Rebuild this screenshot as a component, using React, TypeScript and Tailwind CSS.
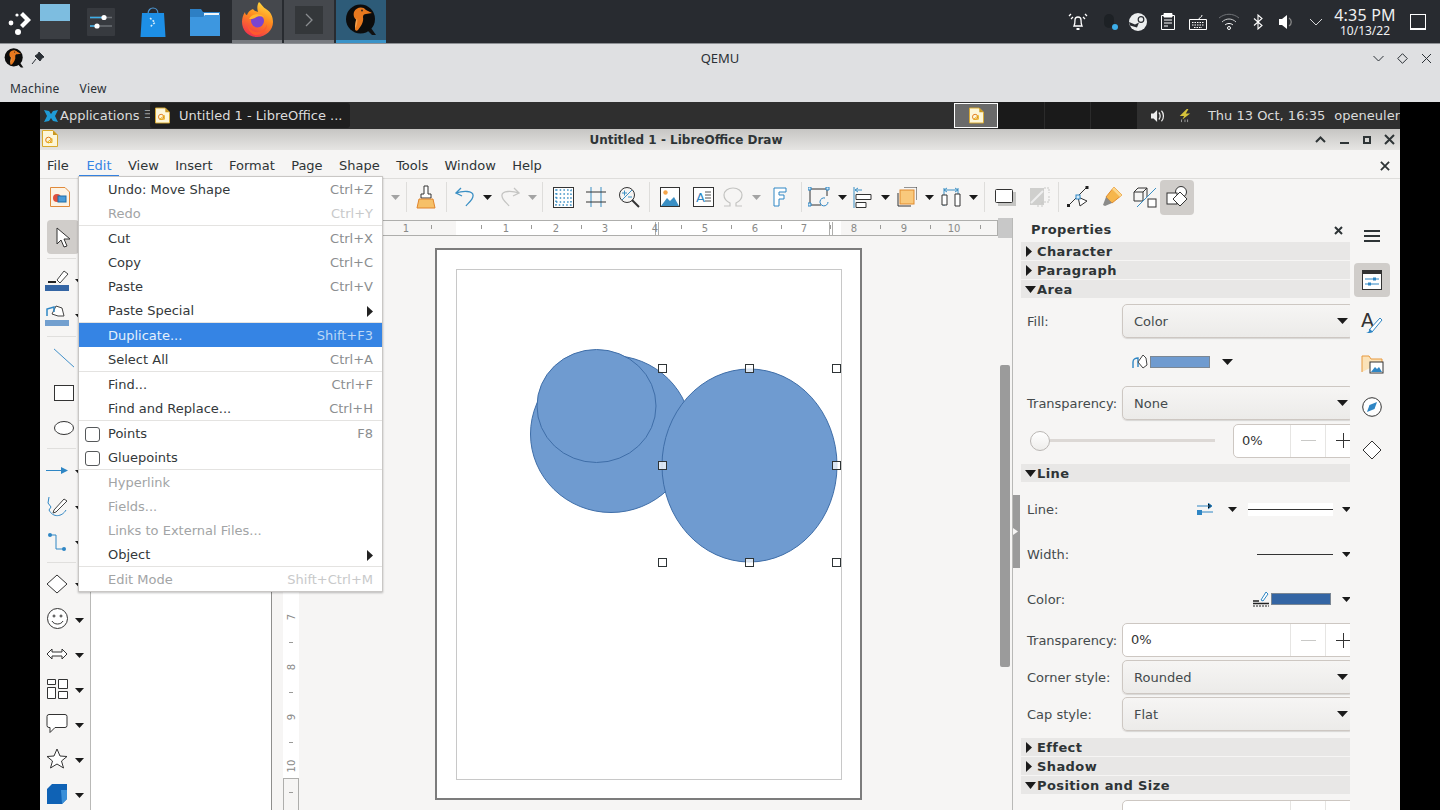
import type { ReactNode } from 'react';

const dejavu = "font-['DejaVu_Sans',sans-serif]";
const noto = "font-['Noto_Sans',sans-serif]";

function Drop({ grey }: { grey?: boolean }) {
  return (
    <svg width="9" height="5" viewBox="0 0 9 5" aria-hidden="true">
      <path d="M0 0h9L4.500 5z" fill={grey ? '#a3a3a3' : '#1a1a1a'} />
    </svg>
  );
}

function Slot({ w, children }: { w: string; children?: ReactNode }) {
  return <div className={`${w} h-full flex items-center justify-center shrink-0`}>{children}</div>;
}

function Sep() {
  return <div className="w-px h-[30px] bg-[#dedddb]" />;
}

function Qemu({ size }: { size: number }) {
  return (
    <svg width={size} height={size} viewBox="0 0 32 32" aria-hidden="true">
      <path d="M22 26l5 5h4l-5-7z" fill="#111" />
      <circle cx="15.500" cy="15" r="14.500" fill="#0c0c0c" />
      <path d="M9 8c2-5 9-6 12-2l6 3-6 1c-2 0-3 1-3 3 1 5-2 9-5 13-1 1-3 1-3-1 0-4 2-6 2-9-3-1-4-5-3-8z" fill="#e8781e" />
      <path d="M12 14c1 4 0 7-2 11 0-4 0-8 2-11z" fill="#f7a04a" />
      <circle cx="17" cy="6.500" r="0.900" fill="#222" />
    </svg>
  );
}

function Firefox() {
  return (
    <svg width="32" height="36" viewBox="0 0 32 36" aria-hidden="true">
      <defs>
        <linearGradient id="ff" x1="0.700" y1="0" x2="0.300" y2="1">
          <stop offset="0" stopColor="#ffdc3e" />
          <stop offset="0.450" stopColor="#ff8a1f" />
          <stop offset="1" stopColor="#f0304e" />
        </linearGradient>
      </defs>
      <path d="M18 0c4 4 4 5 7 7 5 3 7 8 7 13 0 8-7 15-16 15S1 28 1 20c0-4 1-7 3-10 0 2 1 3 2 3 1-3 3-5 6-6 1 2 3 2 5 3-1-3-1-7 1-10z" fill="url(#ff)" />
      <circle cx="16.500" cy="19" r="6.500" fill="#7a44d0" />
      <path d="M8 17c2-5 10-7 15-2-3-1-7-1-9 1-2 1-4 1-6 1z" fill="#ffb72e" />
      <path d="M6 19c0 7 6 12 12 11 4-1 7-4 8-8 0 6-5 11-11 11-5 0-9-6-9-14z" fill="#ff5a2e" />
    </svg>
  );
}

function TaskBar() {
  return (
    <div className="h-[44px] shrink-0 bg-[#282b30] border-b border-[#8d9094] flex items-stretch relative z-10">
      <Slot w="w-[40px]">
        <svg width="26" height="28" viewBox="0 0 26 28" aria-hidden="true">
          <circle cx="10" cy="7" r="1.600" fill="#fff" />
          <circle cx="4" cy="15" r="2.400" fill="#fff" />
          <circle cx="11" cy="24" r="3" fill="#fff" />
          <path d="M16 4l8 8-8 8-3-3 5-5-5-5z" fill="#fff" />
        </svg>
      </Slot>
      <div className="w-[30px] h-[35px] mt-[4px] bg-[#3b3e43]">
        <div className="h-[17px] bg-[#7dbde0]" />
      </div>
      <Slot w="w-[62px]">
        <svg width="28" height="28" viewBox="0 0 28 28" aria-hidden="true">
          <rect width="28" height="28" rx="1" fill="#373a3f" />
          <path d="M3 9.500h22M3 18h22" stroke="#6c7075" strokeWidth="1.500" />
          <path d="M3 9.500h13M3 18h7" stroke="#3daee9" strokeWidth="1.500" />
          <circle cx="17" cy="9.500" r="2.600" fill="#fff" />
          <circle cx="10" cy="18" r="2.600" fill="#fff" />
        </svg>
      </Slot>
      <Slot w="w-[42px]">
        <svg width="26" height="30" viewBox="0 0 26 30" aria-hidden="true">
          <path d="M8 7c0-8 10-8 10 0" fill="none" stroke="#4d9ad8" strokeWidth="1.200" />
          <path d="M2 6h22l1.500 24H.5z" fill="#1d8fe6" />
          <path d="M10 11l5 4.500-5 4.500" fill="none" stroke="#d8effc" strokeWidth="1.500" strokeDasharray="2 1.500" />
        </svg>
      </Slot>
      <Slot w="w-[58px]">
        <svg width="30" height="28" viewBox="0 0 30 28" className="ml-[3px]" aria-hidden="true">
          <path d="M0 1h11l2 3h17v24H0z" fill="#2d7fc4" />
          <path d="M14 5h15v4H14z" fill="#f3f6f8" />
          <path d="M0 9h13l2-2h15v21H0z" fill="#3d97e0" />
        </svg>
      </Slot>
      <div className="w-[50px] bg-[#45484d] border-b-[3px] border-[#777a7f] flex items-center justify-center">
        <Firefox />
      </div>
      <div className="w-[50px] ml-[2px] bg-[#45484d] border-b-[3px] border-[#777a7f] flex items-center justify-center">
        <div className="w-[28px] h-[28px] bg-[#34373a] flex items-center justify-center">
          <svg width="10" height="14" viewBox="0 0 10 14" aria-hidden="true">
            <path d="M2 1l6 6-6 6" fill="none" stroke="#8a8d90" strokeWidth="1.300" />
          </svg>
        </div>
      </div>
      <div className="w-[50px] ml-[2px] bg-[#2d5b78] border-b-[3px] border-[#3a93c8] flex items-center justify-center">
        <Qemu size={32} />
      </div>
      <div className="flex-1" />
      <Slot w="w-[44px]">
        <svg width="20" height="20" viewBox="0 0 20 20" fill="none" stroke="#fff" strokeWidth="1.300" aria-hidden="true">
          <path d="M6 14c1-2 1-4 1-6 0-4 6-4 6 0 0 2 0 4 1 6z" />
          <path d="M8.500 17h3" strokeWidth="2" />
          <path d="M1 4l2-2M19 4l-2-2M3 7l2-2M17 7l-2-2" />
        </svg>
      </Slot>
      <Slot w="w-[26px]">
        <div className="relative w-[14px] h-[16px] -ml-[4px]">
          <div className="w-[10px] h-[14px] rounded-full bg-[#1d2125]" />
          <div className="absolute right-0 bottom-0 w-[6px] h-[6px] rounded-full bg-[#3daee9]" />
        </div>
      </Slot>
      <Slot w="w-[24px]">
        <svg width="18" height="18" viewBox="0 0 18 18" aria-hidden="true">
          <circle cx="9" cy="9" r="9" fill="#eceeef" />
          <circle cx="12" cy="6.500" r="2.800" fill="none" stroke="#282b30" strokeWidth="1.200" />
          <path d="M0 9l6 2.500 4-2-2 5-7-2z" fill="#282b30" />
        </svg>
      </Slot>
      <Slot w="w-[36px]">
        <svg width="14" height="17" viewBox="0 0 14 17" fill="none" stroke="#fff" aria-hidden="true">
          <path d="M.5 2.500h13v14H.5z" strokeWidth="1" />
          <path d="M3 .5h8V4H3z" fill="#fff" />
          <path d="M3 7h8M3 10h8M3 13h4" />
        </svg>
      </Slot>
      <Slot w="w-[24px]">
        <svg width="18" height="16" viewBox="0 0 18 16" fill="none" stroke="#fff" aria-hidden="true">
          <path d="M.5 5.500h17v10H.5zM10 5c0-2 3-1 3-4" />
          <path d="M3 8.500h12M3 11h12M5 13.500h8" strokeDasharray="1.500 1" />
        </svg>
      </Slot>
      <Slot w="w-[38px]">
        <svg width="22" height="18" viewBox="0 0 22 18" fill="none" stroke="#c9cbcc" aria-hidden="true">
          <path d="M1 5c6-5 14-5 20 0" stroke="#6f7276" />
          <path d="M4 9c4-4 10-4 14 0" />
          <path d="M7 12c2-2 6-2 8 0" stroke="#fff" />
          <circle cx="11" cy="15" r="1.500" stroke="#fff" />
        </svg>
      </Slot>
      <Slot w="w-[20px]">
        <svg width="10" height="16" viewBox="0 0 10 16" fill="none" stroke="#fff" strokeWidth="1.100" aria-hidden="true">
          <path d="M1 4.500l8 7L5 15V1l4 3.500-8 7" />
        </svg>
      </Slot>
      <Slot w="w-[38px]">
        <svg width="16" height="16" viewBox="0 0 16 16" aria-hidden="true">
          <path d="M0 5h3l5-4v14l-5-4H0z" fill="#fff" />
          <path d="M10 4c3 2 3 6 0 8" fill="none" stroke="#888" strokeWidth="1.300" />
        </svg>
      </Slot>
      <Slot w="w-[20px]">
        <svg width="14" height="8" viewBox="0 0 14 8" aria-hidden="true">
          <path d="M1 1l6 6 6-6" fill="none" stroke="#d6d7d8" />
        </svg>
      </Slot>
      <div className={`${noto} w-[66px] ml-[6px] flex flex-col items-center justify-center text-[#eff0f1] whitespace-nowrap`}>
        <div className="text-[16px] leading-[18px] tracking-[0.2px]">4:35 PM</div>
        <div className="text-[12px] leading-[13px]">10/13/22</div>
      </div>
      <Slot w="w-[40px]">
        <div className="w-[16px] h-[16px] border border-white border-b-2" />
      </Slot>
      <div className="w-[2px]" />
    </div>
  );
}

function QemuChrome() {
  return (
    <div className={`${noto} h-[58px] shrink-0 bg-[#dfe0e2] text-[#2b3036] flex flex-col`}>
      <div className="h-[28px] flex items-center relative">
        <div className="w-[28px] pl-[4px]">
          <Qemu size={20} />
        </div>
        <svg width="14" height="14" viewBox="0 0 14 14" aria-hidden="true" className="ml-[3px]">
          <path d="M8 1l5 5-2 1-2 3-5-5 3-2zM5 8l-4 5" fill="#2b3036" stroke="#2b3036" />
        </svg>
        <div className="absolute left-0 right-0 text-center text-[13px] pt-[2px] pointer-events-none">QEMU</div>
        <div className="ml-auto flex items-center gap-[13px] pr-[8px]">
          <svg width="11" height="7" viewBox="0 0 11 7" aria-hidden="true">
            <path d="M.5 1l5 5 5-5" fill="none" stroke="#2b3036" />
          </svg>
          <svg width="11" height="11" viewBox="0 0 11 11" aria-hidden="true">
            <path d="M5.500 .7l4.800 4.800-4.800 4.800-4.800-4.800z" fill="none" stroke="#2b3036" />
          </svg>
          <svg width="11" height="11" viewBox="0 0 11 11" aria-hidden="true">
            <path d="M1 1l9 9M10 1l-9 9" stroke="#2b3036" />
          </svg>
        </div>
      </div>
      <div className="h-[30px] flex items-center pl-[10px] pt-[3px] gap-[20px] text-[12px] tracking-[0.2px]">
        <span>Machine</span>
        <span>View</span>
      </div>
    </div>
  );
}

function DocIcon({ small }: { small?: boolean }) {
  return (
    <svg width={small ? 15 : 16} height="17" viewBox="0 0 16 17" aria-hidden="true">
      <path d="M.5 .5H11l4.500 4.500v11.500H.5z" fill="#fdf6d8" stroke="#d9a92e" />
      <path d="M11 .5l4.500 4.500H11z" fill="#c9961e" />
      <circle cx="6.500" cy="10" r="2.800" fill="none" stroke="#e07b1c" />
      <path d="M5 12.500l5-4v4z" fill="none" stroke="#e8b01c" />
    </svg>
  );
}

function XfcePanel() {
  return (
    <div className={`${dejavu} h-[27px] shrink-0 bg-[#2f2f2f] text-[#dcdcdc] flex items-center text-[13px]`}>
      <svg width="16" height="16" viewBox="0 0 16 16" className="ml-[3px]" aria-hidden="true">
        <path d="M1 2l5 1 2 3 2-3 5-1-3 6 3 6-5-1-2-3-2 3-5 1 3-6z" fill="#1f9bd6" />
      </svg>
      <span className="ml-[1px] w-[84px] whitespace-nowrap">Applications</span>
      <span className="text-[#9b9b9b] text-[11px] w-[6px]">☰</span>
      <div className="w-[200px] h-[25px] bg-[#1f1f1f] rounded-[3px] flex items-center pl-[5px]">
        <DocIcon small />
        <span className="ml-[9px] whitespace-nowrap">Untitled 1 - LibreOffice ...</span>
      </div>
      <div className="ml-[604px] w-[44px] h-[25px] bg-[#6a6a6a] border border-white flex items-center justify-center">
        <DocIcon small />
      </div>
      <div className="w-[139px] self-stretch bg-[#1a1a1a] flex pl-[46px] gap-[45px]">
        <div className="w-px bg-[#2b2b2b]" />
        <div className="w-px bg-[#2b2b2b]" />
      </div>
      <div className="flex-1 self-stretch flex items-center whitespace-nowrap overflow-hidden">
        <svg width="16" height="14" viewBox="0 0 16 14" className="ml-[14px]" aria-hidden="true">
          <path d="M0 4h3l4-4v14l-4-4H0z" fill="#eee" />
          <path d="M9 3c2 2 2 6 0 8M12 1c3 3 3 9 0 12" fill="none" stroke="#eee" strokeWidth="1.400" />
        </svg>
        <svg width="16" height="16" viewBox="0 0 16 16" className="ml-[13px]" aria-hidden="true">
          <path d="M10 0L2 8h5l-2 4 9-7H9l3-5z" fill="#d6c33a" />
          <path d="M4 12v3M8 12v3M11 12v3" stroke="#aaa" />
        </svg>
        <span className="ml-[16px]">Thu 13 Oct, 16:35</span>
        <span className="ml-[9px]">openeuler</span>
      </div>
    </div>
  );
}

function Titlebar() {
  return (
    <div className={`${dejavu} h-[21px] shrink-0 bg-gradient-to-b from-[#c6c5c3] to-[#e6e5e3] relative flex items-center text-[#2e3436] text-[12px] font-bold`}>
      <div className="pl-[2px] -mt-[3px]">
        <DocIcon />
      </div>
      <div className="absolute left-0 right-0 text-center pr-[68px] pointer-events-none">Untitled 1 - LibreOffice Draw</div>
      <div className="ml-auto flex items-center gap-[13px] pr-[5px]">
        <svg width="11" height="7" viewBox="0 0 11 7" aria-hidden="true">
          <path d="M1 6l4.500-4.500L10 6" fill="none" stroke="#2e3436" strokeWidth="2" />
        </svg>
        <svg width="11" height="11" viewBox="0 0 11 11" aria-hidden="true">
          <path d="M1 9h9" stroke="#2e3436" strokeWidth="2" />
        </svg>
        <svg width="8" height="8" viewBox="0 0 8 8" aria-hidden="true">
          <path d="M1 1h6v6H1z" fill="none" stroke="#2e3436" strokeWidth="2" />
        </svg>
        <svg width="11" height="11" viewBox="0 0 11 11" aria-hidden="true">
          <path d="M1 1l9 9M10 1l-9 9" stroke="#2e3436" strokeWidth="2" />
        </svg>
      </div>
    </div>
  );
}

function MenuBar() {
  const names = ['View', 'Insert', 'Format', 'Page', 'Shape', 'Tools', 'Window', 'Help'];
  return (
    <div className={`${dejavu} h-[28px] shrink-0 bg-[#f6f5f4] flex items-center text-[13px] text-[#2e3436] relative`}>
      <span className="ml-[7px] w-[32px] pt-[3px]">File</span>
      <div className="w-[40px] h-full flex items-center justify-center relative text-[#3584e4] pt-[3px]">
        <span>Edit</span>
        <div className="absolute left-0 right-0 bottom-0 h-[3px] bg-[#3584e4]" />
      </div>
      <div className="flex gap-[16.400px] ml-[9px] pt-[3px]">
        {names.map((name) => (
          <span key={name}>{name}</span>
        ))}
      </div>
      <svg width="10" height="10" viewBox="0 0 11 11" className="absolute right-[10px] top-[11px]" aria-hidden="true">
        <path d="M1 1l9 9M10 1l-9 9" stroke="#2e3436" strokeWidth="2" />
      </svg>
    </div>
  );
}

function Toolbar() {
  return (
    <div className="h-[40px] shrink-0 bg-[#f6f5f4] border-t border-[#dedddb] pb-[3px] flex items-center">
      <div className="w-[348px] pl-[10px] h-full flex items-center">
        <svg width="20" height="20" viewBox="0 0 20 20" aria-hidden="true">
          <path d="M.5 .5H15l4.500 4.500v14.500H.5z" fill="#fdf3e4" stroke="#e08a3c" />
          <circle cx="7" cy="11" r="4" fill="#e0503c" />
          <rect x="8" y="9" width="8" height="6" fill="#4a9bd8" stroke="#1f6ea8" />
        </svg>
      </div>
      <Slot w="w-[14px]"><Drop grey /></Slot>
      <Slot w="w-[8px]"><Sep /></Slot>
      <Slot w="w-[32px]">
        <svg width="20" height="24" viewBox="0 0 20 24" aria-hidden="true">
          <path d="M8 1h4v8h3v4H5V9h3z" fill="#fff" stroke="#333" />
          <path d="M3 14h14l2 9H1z" fill="#f6c068" stroke="#e0842c" />
        </svg>
      </Slot>
      <Slot w="w-[8px]"><Sep /></Slot>
      <Slot w="w-[30px]">
        <svg width="20" height="20" viewBox="0 0 20 20" fill="none" stroke="#3a8fc4" strokeWidth="1.300" aria-hidden="true">
          <path d="M6 1L1 6l6 3M1 6c6-2 18-3 17 3 0 4-6 8-7 10" />
        </svg>
      </Slot>
      <Slot w="w-[14px]"><Drop /></Slot>
      <Slot w="w-[31px]">
        <svg width="20" height="20" viewBox="0 0 20 20" fill="none" stroke="#c5c5c3" strokeWidth="1.300" aria-hidden="true">
          <path d="M14 1l5 5-6 3M19 6C13 4 1 3 2 9c0 4 6 8 7 10" />
        </svg>
      </Slot>
      <Slot w="w-[14px]"><Drop grey /></Slot>
      <Slot w="w-[6px]"><Sep /></Slot>
      <Slot w="w-[36px]">
        <svg width="21" height="21" viewBox="0 0 21 21" aria-hidden="true">
          <rect x=".5" y=".5" width="20" height="20" fill="#fff" stroke="#333" />
          <path d="M3 3h15v15H3z" fill="none" stroke="#3a8fc4" strokeWidth="1.500" strokeDasharray="1.500 2.200" />
          <path d="M3 7h15M3 11h15M3 15h15" stroke="#3a8fc4" strokeWidth="1.500" strokeDasharray="1.500 2.200" />
        </svg>
      </Slot>
      <Slot w="w-[30px]">
        <svg width="20" height="20" viewBox="0 0 20 20" aria-hidden="true">
          <path d="M5 0v20M15 0v20" stroke="#3a8fc4" />
          <path d="M0 5h20M0 15h20" stroke="#333" />
        </svg>
      </Slot>
      <Slot w="w-[36px]">
        <svg width="21" height="21" viewBox="0 0 21 21" fill="none" stroke="#333" aria-hidden="true">
          <circle cx="8" cy="8" r="7.500" />
          <path d="M13 13l7 7" strokeWidth="2" />
          <path d="M3 6h5M5.500 3.500v5M9 10h4M3 13L13 3" stroke="#3a8fc4" />
        </svg>
      </Slot>
      <Slot w="w-[4px]"><Sep /></Slot>
      <Slot w="w-[38px]">
        <svg width="20" height="20" viewBox="0 0 20 20" aria-hidden="true">
          <rect x=".5" y=".5" width="19" height="19" fill="#fff" stroke="#333" />
          <circle cx="5.500" cy="5.500" r="2.200" fill="#f5a54a" />
          <path d="M1 19l6-8 3 3 4-4 5 9z" fill="#3a8fc4" />
        </svg>
      </Slot>
      <Slot w="w-[28px]">
        <svg width="21" height="20" viewBox="0 0 21 20" aria-hidden="true">
          <rect x=".5" y=".5" width="20" height="19" fill="#fff" stroke="#333" />
          <text x="3" y="15" fontSize="13" fill="#2f86c4" fontFamily="DejaVu Sans">A</text>
          <path d="M12 5h6M12 8h6M12 11h6M12 14h6" stroke="#555" />
        </svg>
      </Slot>
      <Slot w="w-[32px]">
        <svg width="20" height="20" viewBox="0 0 20 20" fill="none" stroke="#c3c3c1" strokeWidth="1.200" aria-hidden="true">
          <path d="M1 19h6v-3C3 14 1 11 1 8c0-4 4-7 9-7s9 3 9 7c0 3-2 6-6 8v3h6" />
        </svg>
      </Slot>
      <Slot w="w-[14px]"><Drop grey /></Slot>
      <Slot w="w-[34px]">
        <svg width="14" height="20" viewBox="0 0 14 20" fill="#fff" stroke="#2f86c4" aria-hidden="true">
          <path d="M1 1h12v4H6v3h5v4H6v7H1z" />
        </svg>
      </Slot>
      <Slot w="w-[8px]"><Sep /></Slot>
      <Slot w="w-[28px]">
        <svg width="22" height="20" viewBox="0 0 22 20" fill="none" aria-hidden="true">
          <path d="M2 2h17M2 2v16h11" stroke="#333" />
          <path d="M19 2v7" stroke="#333" />
          <path d="M20 15a4 4 0 1 1-3-4" stroke="#2f86c4" />
          <path d="M0 0h3v3H0zM18 0h3v3h-3zM0 16h3v3H0z" fill="#d6ebf8" stroke="#2f86c4" />
        </svg>
      </Slot>
      <Slot w="w-[18px]"><Drop /></Slot>
      <Slot w="w-[24px]">
        <svg width="20" height="21" viewBox="0 0 20 21" fill="none" aria-hidden="true">
          <path d="M1 0v21M2 3h7M2 3l3-2M2 3l3 2" stroke="#3a8fc4" />
          <path d="M3 7.500h15v5H3zM3 15.500h10v5H3z" stroke="#333" fill="#fff" />
        </svg>
      </Slot>
      <Slot w="w-[20px]"><Drop /></Slot>
      <Slot w="w-[24px]">
        <svg width="20" height="20" viewBox="0 0 20 20" fill="none" aria-hidden="true">
          <path d="M7 0h13v13M1 6v13h13" stroke="#333" />
          <rect x="3" y="3" width="14" height="14" fill="#f9c97c" stroke="#e08a2c" />
        </svg>
      </Slot>
      <Slot w="w-[20px]"><Drop /></Slot>
      <Slot w="w-[24px]">
        <svg width="20" height="21" viewBox="0 0 20 21" fill="none" aria-hidden="true">
          <path d="M3 3h14M3 3l3-2M3 3l3 2M17 3l-3-2M17 3l-3 2M3 1v18M17 1v18" stroke="#3a8fc4" />
          <path d="M1 8h5v10H1zM14 7h5v12h-5z" fill="#fff" stroke="#333" />
        </svg>
      </Slot>
      <Slot w="w-[20px]"><Drop /></Slot>
      <Slot w="w-[2px]"><Sep /></Slot>
      <Slot w="w-[40px]">
        <svg width="21" height="17" viewBox="0 0 21 17" aria-hidden="true">
          <path d="M3 3h18v14H3z" fill="#c5c5c3" />
          <rect x=".5" y=".5" width="17" height="13" rx="1" fill="#fff" stroke="#333" />
        </svg>
      </Slot>
      <Slot w="w-[28px]">
        <svg width="21" height="21" viewBox="0 0 21 21" fill="none" aria-hidden="true">
          <path d="M1 1h14v17H1z" fill="#cfcfcd" />
          <path d="M15 1h5v5M20 9v6h-7M9 18v3M13 15v5" stroke="#c9c9c7" strokeDasharray="2 1" />
          <path d="M2 16L14 4" stroke="#eee" strokeWidth="2" />
        </svg>
      </Slot>
      <Slot w="w-[10px]"><Sep /></Slot>
      <Slot w="w-[30px]">
        <svg width="22" height="22" viewBox="0 0 22 22" fill="none" aria-hidden="true">
          <path d="M1 20L20 1" stroke="#333" />
          <path d="M11 11l2 9 7-5z" stroke="#333" fill="#fff" />
          <rect x="0" y="18" width="3" height="3" fill="#222" />
          <rect x="18.500" y="0" width="3" height="3" fill="#222" />
          <rect x="9" y="9" width="4" height="4" fill="#d6ebf8" stroke="#2f86c4" />
        </svg>
      </Slot>
      <Slot w="w-[38px]">
        <svg width="22" height="22" viewBox="0 0 22 22" aria-hidden="true">
          <path d="M13 1l8 8-10 8-6-6z" fill="#f6b64c" stroke="#e08a2c" />
          <path d="M5 11l6 6-7 3-2-1z" fill="#8b8b89" />
          <path d="M13 1l8 8-2 2-8-8z" fill="#fbd68c" />
        </svg>
      </Slot>
      <Slot w="w-[28px]">
        <svg width="24" height="22" viewBox="0 0 24 22" fill="none" aria-hidden="true">
          <path d="M1 6h9v9H1zM1 6l4-4h9v9l-4 4M10 6l4-4" stroke="#333" />
          <path d="M4 21L23 2" stroke="#3a8fc4" />
          <rect x="15" y="13" width="8" height="8" stroke="#333" fill="#fff" />
        </svg>
      </Slot>
      <div className="w-[34px] ml-[1px] h-[35px] rounded-[4px] bg-[#d0cdca] flex items-center justify-center shrink-0">
        <svg width="22" height="22" viewBox="0 0 22 22" fill="none" stroke="#333" aria-hidden="true">
          <circle cx="15" cy="6" r="5.500" fill="#fff" />
          <rect x="1" y="7" width="10" height="11" fill="#fff" />
          <path d="M14 6l7 7-7 7-7-7z" fill="#fff" />
        </svg>
      </div>
    </div>
  );
}

function ToolIcon({ h, children, arrow }: { h: string; children: ReactNode; arrow?: boolean }) {
  return (
    <div className={`${h} w-full flex items-center shrink-0`}>
      <div className="w-[34px] flex items-center justify-center">{children}</div>
      {arrow && (
        <div className="ml-[1px] mt-[3px]">
          <Drop />
        </div>
      )}
    </div>
  );
}

function ToolSep({ h }: { h: string }) {
  return (
    <div className={`${h} shrink-0 flex items-center pl-[7px]`}>
      <div className="w-[29px] h-px bg-[#e0dfdd]" />
    </div>
  );
}

function ToolColumn() {
  return (
    <div className="w-[51px] shrink-0 bg-[#f6f5f4] border-r border-[#b9b9b7] flex flex-col">
      <div className="mt-[2px] ml-[7px] w-[32px] h-[34px] bg-[#d0cdca] rounded-[4px] flex items-center justify-center shrink-0">
        <svg width="16" height="21" viewBox="0 0 16 21" className="ml-[2px]" aria-hidden="true">
          <path d="M1 1v16l4-4 3 7 3-1-3-7h6z" fill="#fff" stroke="#333" />
        </svg>
      </div>
      <ToolSep h="h-[9px]" />
      <ToolIcon h="h-[34px]" arrow>
        <svg width="24" height="22" viewBox="0 0 24 22" aria-hidden="true">
          <path d="M12 11l7-9 4 3-8 9z" fill="#fff" stroke="#444" />
          <path d="M3 13h8" stroke="#222" strokeWidth="2" />
          <path d="M0 16h24v6H0z" fill="#3465a4" />
        </svg>
      </ToolIcon>
      <ToolIcon h="h-[35px]" arrow>
        <svg width="24" height="22" viewBox="0 0 24 22" aria-hidden="true">
          <path d="M7 10l4-8 6 2 2 8-6 0z" fill="#fff" stroke="#444" />
          <path d="M2 12V5l7-2v5" fill="none" stroke="#2f86c4" strokeWidth="1.500" />
          <path d="M0 16h24v6H0z" fill="#729fcf" />
        </svg>
      </ToolIcon>
      <ToolSep h="h-[8px]" />
      <ToolIcon h="h-[35px]">
        <svg width="22" height="20" viewBox="0 0 22 20" className="ml-[14px]" aria-hidden="true">
          <path d="M0 0l22 20" stroke="#2f86c4" />
        </svg>
      </ToolIcon>
      <ToolIcon h="h-[35px]">
        <svg width="20" height="16" viewBox="0 0 20 16" className="ml-[14px]" aria-hidden="true">
          <rect x=".5" y=".5" width="19" height="15" fill="#fff" stroke="#333" />
        </svg>
      </ToolIcon>
      <ToolIcon h="h-[35px]">
        <svg width="20" height="14" viewBox="0 0 20 14" className="ml-[14px]" aria-hidden="true">
          <ellipse cx="10" cy="7" rx="9.500" ry="6.500" fill="#fff" stroke="#333" />
        </svg>
      </ToolIcon>
      <ToolSep h="h-[6px]" />
      <ToolIcon h="h-[39px]" arrow>
        <svg width="22" height="7" viewBox="0 0 22 7" aria-hidden="true">
          <path d="M0 3.500h17" stroke="#2f86c4" />
          <path d="M15 0l7 3.500-7 3.500z" fill="#2f86c4" />
        </svg>
      </ToolIcon>
      <ToolIcon h="h-[34px]" arrow>
        <svg width="22" height="22" viewBox="0 0 22 22" fill="none" aria-hidden="true">
          <path d="M3 1l-1 6 3 4-2 3c4 8 13 7 17 0" stroke="#2f86c4" />
          <path d="M8 14L18 3l3 2-11 11-3 1z" fill="#fff" stroke="#444" />
        </svg>
      </ToolIcon>
      <ToolIcon h="h-[35px]" arrow>
        <svg width="18" height="18" viewBox="0 0 18 18" fill="none" aria-hidden="true">
          <path d="M2 2h6v14h8" stroke="#2f86c4" />
          <circle cx="2" cy="2" r="2" fill="#2f86c4" />
          <circle cx="16" cy="16" r="2" fill="#2f86c4" />
        </svg>
      </ToolIcon>
      <ToolSep h="h-[7px]" />
      <ToolIcon h="h-[35px]" arrow>
        <svg width="22" height="20" viewBox="0 0 22 20" aria-hidden="true">
          <path d="M11 1l10 9-10 9-10-9z" fill="#fff" stroke="#333" />
        </svg>
      </ToolIcon>
      <ToolIcon h="h-[35px]" arrow>
        <svg width="21" height="21" viewBox="0 0 21 21" fill="#fff" stroke="#333" aria-hidden="true">
          <circle cx="10.500" cy="10.500" r="10" />
          <circle cx="7" cy="8" r="1" />
          <circle cx="14" cy="8" r="1" />
          <path d="M5 13c2 4 9 4 11 0" fill="none" />
        </svg>
      </ToolIcon>
      <ToolIcon h="h-[35px]" arrow>
        <svg width="22" height="12" viewBox="0 0 22 12" aria-hidden="true">
          <path d="M1 6l5-5v3h10V1l5 5-5 5V8H6v3z" fill="#fff" stroke="#333" />
        </svg>
      </ToolIcon>
      <ToolIcon h="h-[35px]" arrow>
        <svg width="21" height="20" viewBox="0 0 21 20" fill="#fff" stroke="#333" aria-hidden="true">
          <path d="M.5 .5h8v5h-8zM11.500 .5h9v9h-9zM.5 8.500h8v11h-8zM11.500 12.500h9v7h-9z" />
        </svg>
      </ToolIcon>
      <ToolIcon h="h-[35px]" arrow>
        <svg width="22" height="20" viewBox="0 0 22 20" fill="#fff" stroke="#333" aria-hidden="true">
          <path d="M3 .5h16a2 2 0 0 1 2 2v9a2 2 0 0 1-2 2H9l-5 5v-5H3a2 2 0 0 1-2-2v-9a2 2 0 0 1 2-2z" />
        </svg>
      </ToolIcon>
      <ToolIcon h="h-[35px]" arrow>
        <svg width="22" height="21" viewBox="0 0 22 21" fill="#fff" stroke="#333" aria-hidden="true">
          <path d="M11 1l3 7 7 .5-5.500 4.500 2 7-6.500-4-6.500 4 2-7L1 8.500 8 8z" />
        </svg>
      </ToolIcon>
      <ToolIcon h="h-[35px]" arrow>
        <svg width="20" height="20" viewBox="0 0 20 20" aria-hidden="true">
          <path d="M5 0h15v15l-5 5H0V5z" fill="#0f62b5" />
          <path d="M14 6h6v9l-5 5z" fill="#3a8fd8" />
        </svg>
      </ToolIcon>
    </div>
  );
}

function HRuler() {
  const nums: [number, string][] = [[123, '1'], [223, '1'], [273, '2'], [322, '3'], [372, '4'], [422, '5'], [472, '6'], [521, '7'], [571, '8'], [621, '9'], [671, '10']];
  const ticks = [148, 198, 248, 298, 348, 398, 448, 498, 547, 597, 647, 697];
  return (
    <svg width="715" height="18" viewBox="0 0 715 18" className="mt-[2px] shrink-0" aria-hidden="true">
      <rect x=".5" y=".5" width="714" height="15" fill="#f6f5f4" stroke="#aeaeac" />
      <rect x="173" y="1" width="385" height="14" fill="#fff" />
      <path d="M372.500 2v13M375.500 2v13M546.500 2v13M549.500 2v13" stroke="#aeaeac" />
      {ticks.map((x) => (
        <path key={x} d={`M${x + 0.5} 5v4`} stroke="#9a9a98" />
      ))}
      {nums.map(([x, label]) => (
        <text key={`${x}-${label}`} x={x} y="12" fontSize="10" textAnchor="middle" fill="#8a8a88" fontFamily="DejaVu Sans">
          {label}
        </text>
      ))}
    </svg>
  );
}

function VRuler() {
  const nums: [number, string][] = [[379, '7'], [429, '8'], [479, '9'], [528, '10']];
  return (
    <svg width="16" height="572" viewBox="0 0 16 572" className="shrink-0" aria-hidden="true">
      <rect x="0" y="0" width="16" height="540" fill="#fff" />
      <rect x=".5" y="540.500" width="15" height="40" fill="#f6f5f4" stroke="#aeaeac" />
      {[404, 454, 504, 554].map((y) => (
        <path key={y} d={`M6 ${y + 0.5}h4`} stroke="#9a9a98" />
      ))}
      {nums.map(([y, label]) => (
        <text key={label} x="8" y={y} fontSize="10" textAnchor="middle" dominantBaseline="central" fill="#8a8a88" fontFamily="DejaVu Sans" transform={`rotate(-90 8 ${y})`}>
          {label}
        </text>
      ))}
    </svg>
  );
}

function Shapes() {
  const handles: [number, number][] = [[662.5, 368.5], [749.5, 368.5], [836.5, 368.5], [662.5, 465.5], [836.5, 465.5], [662.5, 562.5], [749.5, 562.5], [836.5, 562.5]];
  return (
    <svg width="427" height="552" viewBox="435 248 427 552" className="absolute -left-[2px] -top-[2px]" aria-hidden="true">
      <ellipse cx="611" cy="434" rx="80.500" ry="78.500" fill="#6f9bd0" stroke="#3f6ea8" />
      <ellipse cx="596.500" cy="406" rx="59.500" ry="56.500" fill="#6f9bd0" stroke="#3f6ea8" />
      <ellipse cx="749.500" cy="465.500" rx="87.500" ry="96.500" fill="#6f9bd0" stroke="#3f6ea8" />
      {handles.map(([x, y]) => (
        <rect key={`${x}-${y}`} x={x - 4} y={y - 4} width="8" height="8" fill="#fff" fillOpacity="0.75" stroke="#2e3436" />
      ))}
    </svg>
  );
}

function Workspace() {
  return (
    <div className="flex-1 min-w-0 bg-[#f6f5f4] flex flex-col">
      <div className="h-[20px] flex shrink-0 pl-[11px]">
        <HRuler />
        <div className="w-[14px] bg-[#c8c8c8]" />
      </div>
      <div className="flex-1 min-h-0 flex pl-[11px]">
        <VRuler />
        <div className="flex-1 pl-[136px] pt-[10px]">
          <div className="relative w-[427px] h-[552px] border-2 border-[#7c7c7c] bg-white pl-[19px] pr-[18px] pt-[19px] pb-[18px]">
            <div className="w-full h-full border border-[#c8c8c8]" />
            <Shapes />
          </div>
        </div>
        <div className="w-[14px] shrink-0 pt-[127px] pl-[2px]">
          <div className="w-[10px] h-[302px] bg-[#9b9b9b] rounded-[2px]" />
        </div>
      </div>
    </div>
  );
}

function Bar({ open, label }: { open?: boolean; label: string }) {
  return (
    <div className={`${dejavu} h-[18px] bg-[#e8e7e6] flex items-center font-bold text-[13px] tracking-[0.4px] text-[#2e3436] leading-none`}>
      <div className="w-[16px] flex justify-center pl-[2px]">
        {open ? (
          <svg width="11" height="7" viewBox="0 0 11 7" aria-hidden="true">
            <path d="M0 0h11L5.500 7z" fill="#1a1a1a" />
          </svg>
        ) : (
          <svg width="6" height="11" viewBox="0 0 6 11" className="mr-[2px]" aria-hidden="true">
            <path d="M0 0l6 5.500L0 11z" fill="#1a1a1a" />
          </svg>
        )}
      </div>
      <span>{label}</span>
    </div>
  );
}

function Label({ children }: { children: string }) {
  return <div className={`${dejavu} w-[101px] pl-[6px] pt-[2px] shrink-0 text-[13px] text-[#444a4c] whitespace-nowrap`}>{children}</div>;
}

function Combo({ value }: { value: string }) {
  return (
    <div className="w-[232px] h-[34px] shrink-0 border border-[#cdc7c2] rounded-[5px] bg-gradient-to-b from-[#f6f5f4] to-[#ecebe9] flex items-center pl-[11px] shadow-[0_1px_1px_#d8d6d4]">
      <span className={`${dejavu} text-[13px] text-[#444a4c] pt-[2px]`}>{value}</span>
      <div className="ml-auto mr-[5px]">
        <svg width="11" height="6" viewBox="0 0 11 6" aria-hidden="true">
          <path d="M0 0h11L5.500 6z" fill="#1a1a1a" />
        </svg>
      </div>
    </div>
  );
}

function Spin({ value, w }: { value: string; w: string }) {
  return (
    <div className={`${w} h-[34px] shrink-0 border border-[#cdc7c2] rounded-[5px] bg-white flex items-center`}>
      <span className={`${dejavu} flex-1 pl-[8px] text-[13px] text-[#333]`}>{value}</span>
      <div className="w-[35px] h-full border-l border-[#e6e5e3] flex items-center justify-center">
        <div className="w-[15px] h-px bg-[#c9c9c7]" />
      </div>
      <div className="w-[36px] h-full border-l border-[#e6e5e3] flex items-center justify-center">
        <svg width="15" height="15" viewBox="0 0 15 15" aria-hidden="true">
          <path d="M7.500 0v15M0 7.500h15" stroke="#333" />
        </svg>
      </div>
    </div>
  );
}

function PropertiesPanel() {
  return (
    <div className="w-[329px] shrink-0 overflow-hidden">
      <div className={`${dejavu} h-[24px] flex items-center relative text-[#2e3436] font-bold text-[13px] tracking-[0.4px] pl-[10px]`}>
        <span>Properties</span>
        <svg width="9" height="9" viewBox="0 0 9 9" className="ml-auto mr-[7px]" aria-hidden="true">
          <path d="M1 1l7 7M8 1L1 8" stroke="#2e3436" strokeWidth="2" />
        </svg>
      </div>
      <div className="flex flex-col gap-px">
        <Bar label="Character" />
        <Bar label="Paragraph" />
        <Bar open label="Area" />
      </div>
      <div className="flex items-center mt-[6px]">
        <Label>Fill:</Label>
        <Combo value="Color" />
      </div>
      <div className="flex items-center mt-[18px] h-[12px] pl-[111px]">
        <svg width="16" height="16" viewBox="0 0 16 16" aria-hidden="true">
          <path d="M1 14V8c0-3 3-4 5-4v9" fill="none" stroke="#2f86c4" strokeWidth="1.400" />
          <path d="M6 8l5-7 3 3 1 7-4 3z" fill="#fff" stroke="#444" />
        </svg>
        <div className="w-[60px] h-[12px] ml-[2px] bg-[#6f9bd0] border border-[#7b8794]" />
        <div className="ml-[12px]">
          <svg width="11" height="6" viewBox="0 0 11 6" aria-hidden="true">
            <path d="M0 0h11L5.500 6z" fill="#1a1a1a" />
          </svg>
        </div>
      </div>
      <div className="flex items-center mt-[18px]">
        <Label>Transparency:</Label>
        <Combo value="None" />
      </div>
      <div className="flex items-center mt-[4px] h-[33px] pl-[9px]">
        <div className="w-[20px] h-[20px] rounded-full bg-gradient-to-b from-white to-[#eeedeb] border border-[#b9b6b3] relative z-10 shrink-0" />
        <div className="w-[165px] h-[3px] bg-[#dcd8d5] shrink-0" />
        <div className="ml-[18px] shrink-0">
          <Spin value="0%" w="w-[129px]" />
        </div>
      </div>
      <div className="mt-[7px]">
        <Bar open label="Line" />
      </div>
      <div className="flex items-center mt-[17px] h-[20px]">
        <Label>Line:</Label>
        <svg width="16" height="12" viewBox="0 0 16 12" className="ml-[75px] shrink-0" aria-hidden="true">
          <path d="M0 3h15M11 0l4 3-4 3M4 9h12" stroke="#2f86c4" />
          <rect x="0" y="7" width="5" height="5" fill="#2f86c4" />
        </svg>
        <div className="ml-[15px] shrink-0"><Drop /></div>
        <div className="ml-[11px] w-[85px] h-[13px] bg-white flex items-center shrink-0">
          <div className="w-full h-px bg-[#333]" />
        </div>
        <div className="ml-[9px] shrink-0"><Drop /></div>
      </div>
      <div className="flex items-center mt-[25px] h-[20px]">
        <Label>Width:</Label>
        <div className="ml-[135px] w-[76px] h-px bg-[#333] shrink-0" />
        <div className="ml-[9px] shrink-0"><Drop /></div>
      </div>
      <div className="flex items-center mt-[25px] h-[20px]">
        <Label>Color:</Label>
        <svg width="16" height="16" viewBox="0 0 16 16" className="ml-[131px] shrink-0" aria-hidden="true">
          <path d="M8 9l5-8 2 2-5 7z" fill="#fff" stroke="#2f86c4" />
          <path d="M0 10h6M0 12.500h16" stroke="#222" strokeWidth="1.400" />
          <path d="M0 15h16" stroke="#222" strokeDasharray="2 1" />
        </svg>
        <div className="w-[60px] h-[12px] ml-[2px] bg-[#3465a4] border border-[#7b8794] shrink-0" />
        <div className="ml-[11px] shrink-0"><Drop /></div>
      </div>
      <div className="flex items-center mt-[14px]">
        <Label>Transparency:</Label>
        <Spin value="0%" w="w-[240px]" />
      </div>
      <div className="flex items-center mt-[3px]">
        <Label>Corner style:</Label>
        <Combo value="Rounded" />
      </div>
      <div className="flex items-center mt-[3px]">
        <Label>Cap style:</Label>
        <Combo value="Flat" />
      </div>
      <div className="flex flex-col gap-px mt-[7px]">
        <Bar label="Effect" />
        <Bar label="Shadow" />
        <Bar open label="Position and Size" />
      </div>
      <div className="flex mt-[6px]">
        <div className="w-[101px] shrink-0" />
        <Spin value="" w="w-[240px]" />
      </div>
    </div>
  );
}

function SideDeck() {
  return (
    <div className="w-[50px] shrink-0 flex flex-col items-center">
      <svg width="16" height="12" viewBox="0 0 16 12" className="mt-[12px] ml-[-6px]" aria-hidden="true">
        <path d="M0 1h16M0 6h16M0 11h16" stroke="#2e3436" strokeWidth="2" />
      </svg>
      <div className="mt-[21px] -ml-[6px] w-[36px] h-[34px] rounded-[4px] bg-[#d0cdca] flex items-center justify-center">
        <svg width="20" height="20" viewBox="0 0 20 20" aria-hidden="true">
          <rect x=".5" y=".5" width="19" height="19" fill="#fff" stroke="#333" />
          <path d="M1 1h18v3H1z" fill="#333" />
          <path d="M3 9h14M3 14h14" stroke="#2f86c4" />
          <rect x="11" y="7.500" width="3" height="3" fill="#2f86c4" />
          <rect x="6" y="12.500" width="3" height="3" fill="#2f86c4" />
        </svg>
      </div>
      <svg width="22" height="24" viewBox="0 0 22 24" className="mt-[14px] -ml-[6px] overflow-visible" aria-hidden="true">
        <text x="0" y="16" fontSize="19" fill="#333" fontFamily="DejaVu Sans">A</text>
        <path d="M8 19l11-12 2 2-10 12z" fill="#fff" stroke="#2f86c4" />
        <path d="M5 22c2 0 4-3 4-4l3 3-3 1z" fill="#2f86c4" />
      </svg>
      <svg width="23" height="20" viewBox="0 0 23 20" className="mt-[19px] -ml-[6px]" aria-hidden="true">
        <path d="M1 18V2h7l2 3h11v3" fill="#fbe2b8" stroke="#e8993e" />
        <rect x="9" y="8" width="13" height="11" fill="#fff" stroke="#333" />
        <path d="M10 18l4-5 2 2 2-2 3 5z" fill="#2f86c4" />
      </svg>
      <svg width="20" height="20" viewBox="0 0 20 20" className="mt-[23px] -ml-[6px]" aria-hidden="true">
        <circle cx="10" cy="10" r="9.300" fill="#fff" stroke="#333" />
        <path d="M15 5l-2.500 7L5 15l2.500-7z" fill="#2f86c4" />
      </svg>
      <svg width="20" height="20" viewBox="0 0 20 20" className="mt-[23px] -ml-[6px]" aria-hidden="true">
        <path d="M10 1l9 9-9 9-9-9z" fill="#fff" stroke="#333" />
      </svg>
    </div>
  );
}

function Sidebar() {
  return (
    <div className="w-[388px] shrink-0 bg-[#f6f5f4] border-l border-[#b9b9b7] flex">
      <div className="w-[8px] shrink-0 pt-[277px]">
        <div className="w-[7px] h-[73px] bg-[#9b9b9b] flex items-center">
          <svg width="5" height="7" viewBox="0 0 5 7" aria-hidden="true">
            <path d="M0 0l5 3.500L0 7z" fill="#f6f5f4" />
          </svg>
        </div>
      </div>
      <PropertiesPanel />
      <SideDeck />
    </div>
  );
}

type Entry = { label: string; key?: string; off?: boolean; on?: boolean; sub?: boolean; check?: boolean; sep?: boolean };

const entries: Entry[] = [
  { label: 'Undo: Move Shape', key: 'Ctrl+Z' },
  { label: 'Redo', key: 'Ctrl+Y', off: true, sep: true },
  { label: 'Cut', key: 'Ctrl+X' },
  { label: 'Copy', key: 'Ctrl+C' },
  { label: 'Paste', key: 'Ctrl+V' },
  { label: 'Paste Special', sub: true, sep: true },
  { label: 'Duplicate...', key: 'Shift+F3', on: true },
  { label: 'Select All', key: 'Ctrl+A', sep: true },
  { label: 'Find...', key: 'Ctrl+F' },
  { label: 'Find and Replace...', key: 'Ctrl+H', sep: true },
  { label: 'Points', key: 'F8', check: true },
  { label: 'Gluepoints', check: true, sep: true },
  { label: 'Hyperlink', off: true },
  { label: 'Fields...', off: true },
  { label: 'Links to External Files...', off: true },
  { label: 'Object', sub: true, sep: true },
  { label: 'Edit Mode', key: 'Shift+Ctrl+M', off: true },
];

function EditMenu() {
  return (
    <div className={`${dejavu} absolute left-[38px] top-[74px] w-[305px] bg-white border border-[#c9c7c5] shadow-[0_1px_2px_rgba(0,0,0,0.25)] text-[13px] z-20`}>
      {entries.map((entry) => (
        <div key={entry.label} className={entry.sep ? 'border-b border-[#e4e3e1]' : ''}>
          <div className={`h-[24px] flex items-center pr-[9px] pt-[2px] ${entry.on ? 'bg-[#3584e4] text-[#e4f0fc]' : entry.off ? 'text-[#a2a4a5]' : 'text-[#33383a]'}`}>
            <div className="w-[29px] pl-[6px] shrink-0">
              {entry.check && <div className="w-[15px] h-[15px] rounded-[3px] border border-[#55585a] bg-white" />}
            </div>
            <span className="whitespace-nowrap">{entry.label}</span>
            {entry.key && (
              <span className={`ml-auto whitespace-nowrap ${entry.on ? 'text-[#bcd8f6]' : entry.off ? 'text-[#c8c9ca]' : 'text-[#8b8e90]'}`}>{entry.key}</span>
            )}
            {entry.sub && (
              <svg width="6" height="11" viewBox="0 0 6 11" className="ml-auto" aria-hidden="true">
                <path d="M0 0l6 5.500L0 11z" fill="#222" />
              </svg>
            )}
          </div>
        </div>
      ))}
    </div>
  );
}

export default function App() {
  return (
    <div className="w-[1440px] h-[810px] overflow-hidden flex flex-col bg-black">
      <TaskBar />
      <QemuChrome />
      <div className="flex-1 min-h-0 flex pl-[40px]">
        <div className="w-[1360px] flex flex-col relative">
          <XfcePanel />
          <Titlebar />
          <MenuBar />
          <Toolbar />
          <div className="flex-1 min-h-0 flex">
            <ToolColumn />
            <div className="w-[181px] shrink-0 bg-white border-r border-[#8f8f8d]" />
            <Workspace />
            <Sidebar />
          </div>
          <EditMenu />
        </div>
      </div>
    </div>
  );
}
